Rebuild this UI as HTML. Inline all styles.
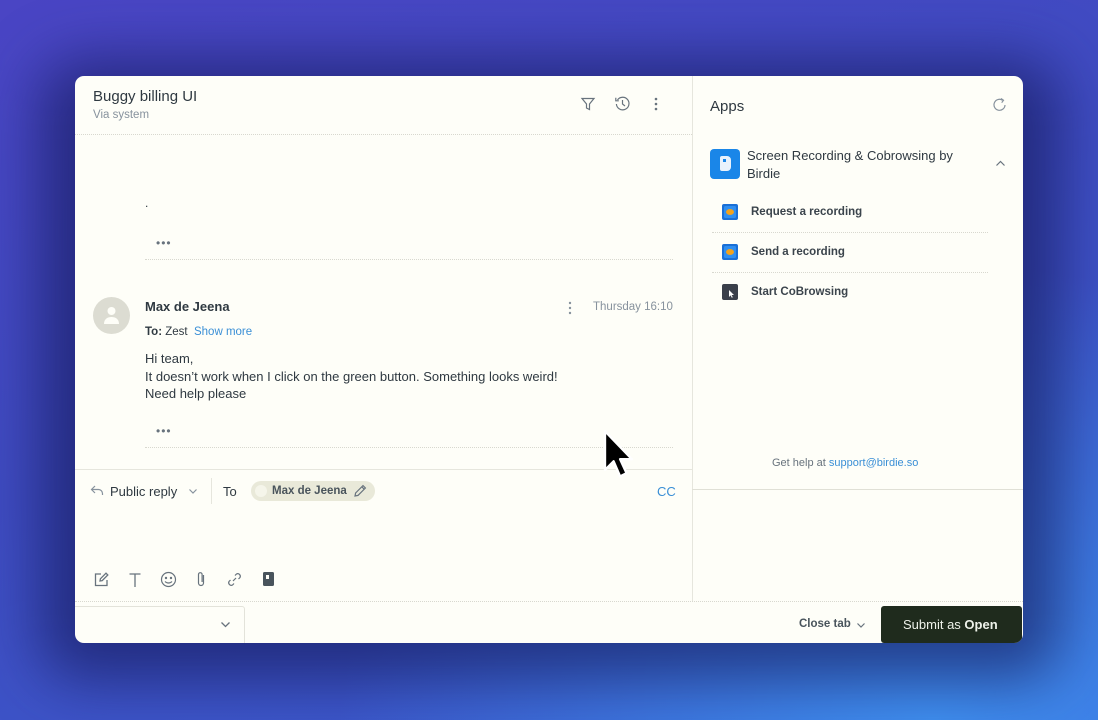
<!DOCTYPE html>
<html><head><meta charset="utf-8"><style>
*{box-sizing:border-box;margin:0;padding:0}
body{width:1098px;height:720px;overflow:hidden;font-family:"Liberation Sans",sans-serif;color:#2f3941;
background:radial-gradient(ellipse at 85% 100%,#3f8ff0 0%,rgba(63,143,240,0) 45%),linear-gradient(160deg,#4a45c4 0%,#3f4cc2 45%,#3a5fd0 100%);position:relative}
.shadow{position:absolute;left:40px;top:60px;width:1020px;height:620px;border-radius:40px;background:rgba(20,25,90,.65);filter:blur(30px)}
.win{position:absolute;left:75px;top:76px;width:948px;height:567px;background:#fefef8;border-radius:9px;overflow:hidden}
.abs{position:absolute}
.dl{position:absolute;height:0;border-top:1px dotted #d8d8cf}
.vl{position:absolute;width:0;border-left:1px solid #e6e6dd}
.t{position:absolute;white-space:nowrap}
</style></head><body>
<div class="shadow"></div>
<div class="win">
 <div class="t" style="left:18px;top:12px;font-size:15px;color:#2f3941">Buggy billing UI</div>
 <div class="t" style="left:18px;top:33px;font-size:11.5px;color:#87929d">Via system</div>
 <svg class="abs" style="left:505px;top:20px" width="16" height="16" viewBox="0 0 16 16" fill="none" stroke="#68737d" stroke-width="1.2"><path d="M2 2.5h12l-4.5 5.5v5.5l-3-1.5V8z"/></svg>
 <svg class="abs" style="left:539px;top:19px" width="17" height="17" viewBox="0 0 17 17" fill="none" stroke="#68737d" stroke-width="1.2"><path d="M3.5 5A6.3 6.3 0 1 1 2.4 9"/><path d="M1.8 2.8v3h3"/><path d="M8.5 5v4l2.5 2"/></svg>
 <svg class="abs" style="left:578px;top:20px" width="6" height="16" viewBox="0 0 6 16" fill="#68737d"><circle cx="3" cy="3" r="1.3"/><circle cx="3" cy="8" r="1.3"/><circle cx="3" cy="13" r="1.3"/></svg>
 <div class="dl" style="left:0;top:58px;width:617px"></div>
 <div class="t" style="left:70px;top:120px;font-size:12px">.</div>
 <div class="t" style="left:81px;top:160px;font-size:12px;color:#68737d;letter-spacing:1px">•••</div>
 <div class="dl" style="left:70px;top:183px;width:528px"></div>
 <div class="abs" style="left:18px;top:221px;width:37px;height:37px;border-radius:50%;background:#dcdcd2"></div>
 <svg class="abs" style="left:28px;top:229px" width="17" height="21" viewBox="0 0 17 21" fill="#fefef8"><circle cx="8.5" cy="6" r="4"/><path d="M1 19c0-5 3.5-7 7.5-7s7.5 2 7.5 7z"/></svg>
 <div class="t" style="left:70px;top:223px;font-size:13px;font-weight:bold">Max de Jeena</div>
 <svg class="abs" style="left:492px;top:224px" width="6" height="16" viewBox="0 0 6 16" fill="#87929d"><circle cx="3" cy="3" r="1.2"/><circle cx="3" cy="8" r="1.2"/><circle cx="3" cy="13" r="1.2"/></svg>
 <div class="t" style="left:518px;top:225px;font-size:11.5px;color:#87929d">Thursday 16:10</div>
 <div class="t" style="left:70px;top:250px;font-size:11.5px"><b>To:</b> Zest&nbsp;&nbsp;<span style="color:#3a8fd6">Show more</span></div>
 <div class="t" style="left:70px;top:274px;font-size:13px;line-height:17.5px">Hi team,<br>It doesn’t work when I click on the green button. Something looks weird!<br>Need help please</div>
 <div class="t" style="left:81px;top:348px;font-size:12px;color:#68737d;letter-spacing:1px">•••</div>
 <div class="dl" style="left:70px;top:371px;width:528px"></div>
 <div class="abs" style="left:0;top:393px;width:617px;border-top:1px solid #e6e6dd"></div>
 <svg class="abs" style="left:15px;top:408px" width="14" height="12" viewBox="0 0 14 12" fill="none" stroke="#87929d" stroke-width="1.2"><path d="M5 2L1.5 5.5 5 9"/><path d="M1.5 5.5h7a4 4 0 0 1 4 4V11"/></svg>
 <div class="t" style="left:35px;top:408px;font-size:13px">Public reply</div>
 <svg class="abs" style="left:113px;top:412px" width="10" height="7" viewBox="0 0 10 7" fill="none" stroke="#87929d" stroke-width="1.2"><path d="M1.5 1.5l3.5 3.5 3.5-3.5"/></svg>
 <div class="vl" style="left:136px;top:402px;height:26px"></div>
 <div class="t" style="left:148px;top:408px;font-size:13px">To</div>
 <div class="abs" style="left:176px;top:405px;width:124px;height:20px;border-radius:10px;background:#e9e9d9"></div>
 <div class="abs" style="left:180px;top:409px;width:12px;height:12px;border-radius:50%;background:#f5f5ea"></div>
 <div class="t" style="left:197px;top:405px;line-height:20px;font-size:11.5px;font-weight:bold;color:#49545c">Max de Jeena</div>
 <svg class="abs" style="left:278px;top:408px" width="14" height="14" viewBox="0 0 14 14" fill="none" stroke="#68737d" stroke-width="1.2"><path d="M2 12l.6-3L10 1.6l2.4 2.4L5 11.4z"/><path d="M8.8 2.8l2.4 2.4"/></svg>
 <div class="t" style="left:582px;top:408px;font-size:13px;color:#3a8fd6">CC</div>
 <svg class="abs" style="left:18px;top:495px" width="17" height="17" viewBox="0 0 17 17" fill="none" stroke="#68737d" stroke-width="1.3"><path d="M8 3H2.5v11.5H14V9"/><path d="M7 10l.4-2.2L13 2.2l1.8 1.8L9.2 9.6z"/></svg>
 <svg class="abs" style="left:53px;top:496px" width="14" height="16" viewBox="0 0 14 16" fill="none" stroke="#68737d" stroke-width="1.3"><path d="M1.5 2h11M7 2v13"/></svg>
 <svg class="abs" style="left:85px;top:495px" width="17" height="17" viewBox="0 0 17 17" fill="none" stroke="#68737d" stroke-width="1.2"><circle cx="8.5" cy="8.5" r="7"/><circle cx="6" cy="7" r=".6" fill="#68737d"/><circle cx="11" cy="7" r=".6" fill="#68737d"/><path d="M5 10.5c2 2 5 2 7 0"/></svg>
 <svg class="abs" style="left:120px;top:495px" width="12" height="17" viewBox="0 0 12 17" fill="none" stroke="#68737d" stroke-width="1.2"><path d="M8.5 4v8a2.5 2.5 0 0 1-5 0V3.5a1.8 1.8 0 0 1 3.6 0V11"/></svg>
 <svg class="abs" style="left:151px;top:495px" width="17" height="17" viewBox="0 0 17 17" fill="none" stroke="#68737d" stroke-width="1.2"><path d="M7 10l3-3"/><path d="M9 4.5l1.5-1.5a2.6 2.6 0 0 1 3.5 3.5L12.5 8"/><path d="M8 12.5L6.5 14A2.6 2.6 0 0 1 3 10.5L4.5 9"/></svg>
 <svg class="abs" style="left:187px;top:495px" width="13" height="16" viewBox="0 0 13 16"><rect x="1" y="1" width="11" height="14" rx="1.5" fill="#49545c"/><rect x="4" y="4" width="3" height="4" fill="#fefef8"/></svg>
 <div class="vl" style="left:617px;top:0;height:525px"></div>
 <div class="dl" style="left:0;top:525px;width:948px"></div>
 <div class="abs" style="left:-5px;top:530px;width:175px;height:40px;border:1px solid #e3e3da;border-radius:3px"></div>
 <svg class="abs" style="left:145px;top:545px" width="11" height="8" viewBox="0 0 11 8" fill="none" stroke="#68737d" stroke-width="1.3"><path d="M1.5 1.5l4 4 4-4"/></svg>
 <div class="t" style="left:724px;top:542px;font-size:11.5px;font-weight:bold;color:#49545c">Close tab</div>
 <svg class="abs" style="left:781px;top:546px" width="10" height="7" viewBox="0 0 10 7" fill="none" stroke="#68737d" stroke-width="1.2"><path d="M1.5 1.5l3.5 3.5 3.5-3.5"/></svg>
 <div class="abs" style="left:806px;top:530px;width:141px;height:37px;background:#1f2b1d;border-radius:3px"></div>
 <div class="t" style="left:828px;top:541px;font-size:13px;color:#eef2ea">Submit as <b>Open</b></div>
 <div class="t" style="left:635px;top:22px;font-size:15px">Apps</div>
 <svg class="abs" style="left:917px;top:21px" width="16" height="16" viewBox="0 0 16 16" fill="none" stroke="#87929d" stroke-width="1.2"><path d="M13 8A5.5 5.5 0 1 1 10.5 3.2"/><path d="M9 1.5l2.5 1.8-1.8 2.4"/></svg>
 <div class="abs" style="left:635px;top:73px;width:30px;height:30px;border-radius:4px;background:#1a86e8"></div>
 <div class="abs" style="left:645px;top:80px;width:11px;height:15px;border-radius:2px 4px 4px 2px;background:#e9f2fc"></div>
 <div class="abs" style="left:648px;top:83px;width:3px;height:3px;background:#1a86e8"></div>
 <div class="t" style="left:672px;top:71px;font-size:13px;line-height:18px">Screen Recording &amp; Cobrowsing by<br>Birdie</div>
 <svg class="abs" style="left:920px;top:84px" width="11" height="7" viewBox="0 0 11 7" fill="none" stroke="#68737d" stroke-width="1.2"><path d="M1.5 5.5l4-4 4 4"/></svg>
 <svg class="abs" style="left:647px;top:128px" width="16" height="16" viewBox="0 0 16 16"><rect width="16" height="16" rx="2" fill="#1a6fd6"/><rect x="2" y="2" width="12" height="12" rx="1.5" fill="#2f8ef0"/><ellipse cx="8" cy="8" rx="4" ry="3" fill="#f3a21c"/></svg>
 <div class="t" style="left:676px;top:130px;font-size:11.5px;font-weight:bold;color:#3b444c">Request a recording</div>
 <div class="dl" style="left:637px;top:156px;width:276px"></div>
 <svg class="abs" style="left:647px;top:168px" width="16" height="16" viewBox="0 0 16 16"><rect width="16" height="16" rx="2" fill="#1a6fd6"/><rect x="2" y="2" width="12" height="12" rx="1.5" fill="#2f8ef0"/><ellipse cx="8" cy="8" rx="4" ry="3" fill="#f3a21c"/></svg>
 <div class="t" style="left:676px;top:170px;font-size:11.5px;font-weight:bold;color:#3b444c">Send a recording</div>
 <div class="dl" style="left:637px;top:196px;width:276px"></div>
 <svg class="abs" style="left:647px;top:208px" width="16" height="16" viewBox="0 0 16 16"><rect width="16" height="16" rx="2" fill="#3a3f4a"/><path d="M7 6v7l1.6-1.6 1.2 2.4 1-.5-1.2-2.3H12z" fill="#fff"/></svg>
 <div class="t" style="left:676px;top:210px;font-size:11.5px;font-weight:bold;color:#3b444c">Start CoBrowsing</div>
 <div class="t" style="left:697px;top:381px;font-size:11px;color:#68737d">Get help at <span style="color:#3a8fd6">support@birdie.so</span></div>
 <div class="abs" style="left:617px;top:413px;width:331px;border-top:1px solid #e0e0d6"></div>
</div>
<svg style="position:absolute;left:601px;top:429px" width="36" height="56" viewBox="0 0 32 52"><path d="M3 2v36l8-8 6 14 6-3-6-13h11z" fill="#000" stroke="#fff" stroke-width="2.2" stroke-linejoin="round"/></svg>
</body></html>
